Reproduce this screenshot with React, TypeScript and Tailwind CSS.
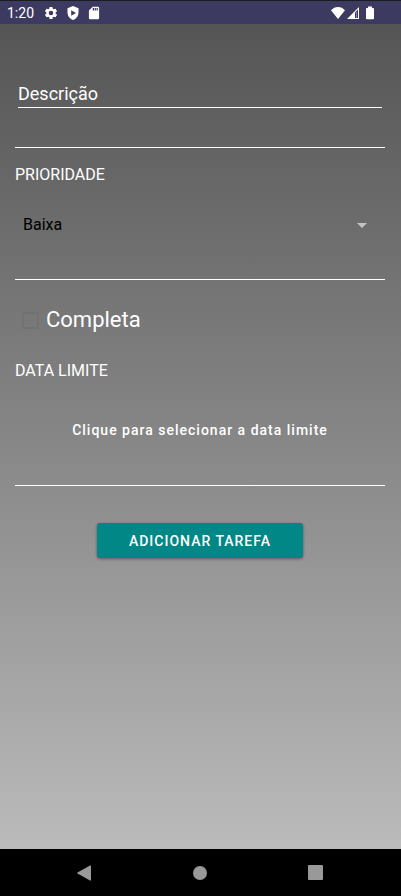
import { useState } from "react";

function StatusBar() {
  return (
    <header className="flex h-6 shrink-0 items-center justify-between border-t border-[#1c1b20] bg-[#3c3a60] pl-[7px] pr-[26px] pt-px">
      <div className="flex items-center">
        <span className="w-[37px] text-sm leading-5">1:20</span>
        <svg viewBox="1 1 22 22" className="mr-2 size-3.5" fill="currentColor" aria-hidden="true">
          <path d="M19.14 12.94c.04-.3.06-.61.06-.94s-.02-.64-.07-.94l2.03-1.58a.49.49 0 0 0 .12-.61l-1.92-3.32a.49.49 0 0 0-.59-.22l-2.39.96a7 7 0 0 0-1.62-.94l-.36-2.54a.48.48 0 0 0-.48-.41h-3.84a.48.48 0 0 0-.47.41l-.36 2.54c-.59.24-1.13.57-1.62.94l-2.39-.96a.48.48 0 0 0-.59.22L2.74 8.87a.48.48 0 0 0 .12.61l2.03 1.58a7.4 7.4 0 0 0 0 1.88l-2.03 1.58a.49.49 0 0 0-.12.61l1.92 3.32c.12.22.37.29.59.22l2.39-.96c.5.38 1.03.7 1.62.94l.36 2.54c.05.24.24.41.48.41h3.84c.24 0 .44-.17.47-.41l.36-2.54a7 7 0 0 0 1.62-.94l2.39.96c.22.08.47 0 .59-.22l1.92-3.32a.48.48 0 0 0-.12-.61zM12 15.6A3.6 3.6 0 1 1 12 8.400a3.600 3.600 0 0 1 0 7.200z" />
        </svg>
        <svg viewBox="0 0 14 14" className="mr-[7px] size-3.5" aria-hidden="true">
          <path d="M7 0 12.500 2.200V6.500C12.500 10 10 13 7 14 4 13 1.500 10 1.500 6.500V2.200Z" fill="currentColor" />
          <path d="M5.200 4.200 10 7 5.200 9.800Z" fill="#3c3a60" />
        </svg>
        <svg viewBox="1 1 22 22" className="size-3.5" fill="currentColor" aria-hidden="true">
          <path d="M18 2h-8L4.020 8 4 20c0 1.100.9 2 2 2h12c1.100 0 2-.9 2-2V4c0-1.100-.9-2-2-2zm-6 6h-2V4h2v4zm3 0h-2V4h2v4zm3 0h-2V4h2v4z" />
        </svg>
      </div>
      <div className="flex items-center">
        <svg viewBox="0 0 14 12" className="mr-[2px] h-3 w-3.5" fill="currentColor" aria-hidden="true">
          <path d="M7 12 0 3.300C1.900 1.200 4.300 0 7 0s5.100 1.200 7 3.300Z" />
        </svg>
        <svg viewBox="0 0 12 12" className="mr-[6px] size-3" aria-hidden="true">
          <path d="M12 0V12H0Z" fill="currentColor" />
          <path d="M8 5.500 11 2.500V11H8Z" fill="#3c3a60" />
          <path d="M9 5h1v6H9Z" fill="#8482a0" />
        </svg>
        <svg viewBox="0 0 10 14" className="h-3.5 w-2.5" fill="currentColor" aria-hidden="true">
          <path d="M3 .5h4V2h1.200a.8.8 0 0 1 .8.800v9.700a.8.8 0 0 1-.8.800H1.800a.8.8 0 0 1-.8-.8V2.800A.8.8 0 0 1 1.800 2H3Z" />
        </svg>
      </div>
    </header>
  );
}

function Divider({ className }: { className: string }) {
  return <hr className={`border-white ${className}`} />;
}

function NavigationBar() {
  return (
    <nav className="flex h-[47px] shrink-0 items-center justify-center gap-[92px] bg-black pr-[2px] text-[#999999]">
      <button type="button" aria-label="Voltar" className="flex w-6 justify-center">
        <svg viewBox="0 0 16 16" className="size-4" fill="currentColor">
          <path d="M14 .6Q15 .2 15 1V15Q15 15.800 14 15.400L1.500 8.600Q.7 8 1.500 7.400Z" />
        </svg>
      </button>
      <button type="button" aria-label="Início" className="flex w-6 justify-center">
        <span className="size-3.5 rounded-full bg-[#999999]" />
      </button>
      <button type="button" aria-label="Aplicativos recentes" className="flex w-6 justify-center">
        <span className="size-[15px] rounded-[1px] bg-[#999999]" />
      </button>
    </nav>
  );
}

export default function App() {
  const [description, setDescription] = useState("");
  const [priority, setPriority] = useState("Baixa");
  const [done, setDone] = useState(false);

  return (
    <div className="flex min-h-screen flex-col font-['Roboto',sans-serif] text-white">
      <StatusBar />
      <main className="flex-1 bg-linear-to-b from-[#555555] to-[#bbbbbb] pl-[15px] pr-4 pt-14">
        <form className="flex flex-col" onSubmit={(e) => e.preventDefault()}>
          <input
            type="text"
            aria-label="Descrição"
            placeholder="Descrição"
            value={description}
            onChange={(e) => setDescription(e.target.value)}
            className="mx-[3px] h-7 border-b border-white bg-transparent text-lg outline-none placeholder:text-white"
          />
          <Divider className="mt-[39px]" />

          <label htmlFor="priority" className="mt-[15px] text-base leading-6">
            PRIORIDADE
          </label>
          <div className="mt-[22px] grid items-center">
            <select
              id="priority"
              value={priority}
              onChange={(e) => setPriority(e.target.value)}
              className="col-start-1 row-start-1 h-8 appearance-none bg-transparent px-2 text-base text-black outline-none"
            >
              <option>Baixa</option>
              <option>Média</option>
              <option>Alta</option>
            </select>
            <svg
              viewBox="0 0 10 5"
              className="pointer-events-none col-start-1 row-start-1 mr-[18px] h-[5px] w-2.5 justify-self-end"
              fill="#c4c4c4"
              aria-hidden="true"
            >
              <path d="M0 0H10L5 5Z" />
            </svg>
          </div>
          <Divider className="mt-[38px]" />

          <label className="mt-6 flex items-center pl-[7px] text-[22px] leading-8">
            <input
              type="checkbox"
              checked={done}
              onChange={(e) => setDone(e.target.checked)}
              className="mr-[7px] size-[17px] appearance-none rounded-xs border-2 border-[#727272] checked:bg-[#018786]"
            />
            Completa
          </label>

          <h2 className="mt-[23px] text-base leading-6">DATA LIMITE</h2>
          <button type="button" className="mt-[29px] h-9 text-sm font-medium tracking-[1px]">
            Clique para selecionar a data limite
          </button>
          <Divider className="mt-[37px]" />

          <button
            type="submit"
            className="mt-[37px] h-[35px] self-center rounded-[3px] bg-[#018786] px-8 text-sm font-medium tracking-[1px] shadow-[0_1px_3px_rgba(0,0,0,0.4)]"
          >
            ADICIONAR TAREFA
          </button>
        </form>
      </main>
      <NavigationBar />
    </div>
  );
}
